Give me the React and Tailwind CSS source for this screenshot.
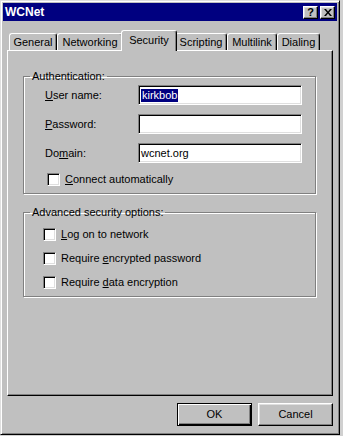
import React from 'react';

const tabs = [
  { label: 'General', w: 'w-[48px]' },
  { label: 'Networking', w: 'w-[66px]' },
  { label: 'Security', w: 'w-[56px]', active: true },
  { label: 'Scripting', w: 'w-[52px]' },
  { label: 'Multilink', w: 'w-[50px]' },
  { label: 'Dialing', w: 'w-[43px]' },
];

// sunken white box (text field / checkbox)
const sunken =
  'bg-white border border-t-[#808080] border-l-[#808080] border-r-white border-b-white shadow-[inset_1px_1px_#000,inset_-1px_-1px_#dfdfdf]';

const raised =
  'bg-[#c0c0c0] border border-t-white border-l-white border-r-black border-b-black shadow-[inset_-1px_-1px_#808080,inset_1px_1px_#dfdfdf]';

function Field({ label, children }) {
  return (
    <div className="flex items-center h-[20px]">
      <div className="w-[93px]">{label}</div>
      <div className={`w-[164px] h-[20px] flex items-center pl-[2px] ${sunken}`}>{children}</div>
    </div>
  );
}

function Check({ children }) {
  return (
    <div className="flex items-center h-[13px]">
      <div className={`w-[13px] h-[13px] ${sunken}`} />
      <span className="ml-[5px]">{children}</span>
    </div>
  );
}

export default function App() {
  return (
    <div className="w-[343px] h-[436px] bg-[#d0d0d0] font-['Liberation_Sans',Arial,sans-serif] text-[11px] leading-[13px] text-black">
      <div className="w-[340px] h-[435px] bg-[#c0c0c0] border border-t-[#dfdfdf] border-l-[#dfdfdf] border-r-black border-b-black shadow-[inset_1px_1px_#fff,inset_-1px_-1px_#808080] p-[2px] flex flex-col">

        {/* Title bar */}
        <div className="h-[18px] bg-[#000080] flex items-center justify-between pl-[2px] pr-[2px]">
          <span className="text-white font-bold text-[12px]">WCNet</span>
          <div className="flex gap-[2px]">
            <div className={`w-[15px] h-[13px] flex items-center justify-center font-bold text-[11px] leading-none ${raised}`}>?</div>
            <div className={`w-[15px] h-[13px] flex items-center justify-center ${raised}`}>
              <svg width="8" height="7" viewBox="0 0 8 7">
                <path d="M0 0h2l2 2.5L6 0h2L5 3.5 8 7H6L4 4.5 2 7H0l3-3.5z" fill="#000" />
              </svg>
            </div>
          </div>
        </div>

        {/* Tabs */}
        <div className="flex items-end h-[20px] mt-[9px] pl-[6px]">
          {tabs.map((t) =>
            t.active ? (
              <div
                key={t.label}
                className={`${t.w} h-[21px] -mb-px -mx-[2px] relative z-10 bg-[#c0c0c0] flex items-start justify-center pt-[3px] border-t border-l border-white border-r border-r-black rounded-t-[3px] shadow-[inset_-1px_0_#808080]`}
              >
                {t.label}
              </div>
            ) : (
              <div
                key={t.label}
                className={`${t.w} h-[17px] flex items-center justify-center border-t border-l border-white border-r border-r-black rounded-t-[3px] shadow-[inset_-1px_0_#808080]`}
              >
                {t.label}
              </div>
            )
          )}
        </div>

        {/* Tab panel */}
        <div className="ml-[4px] w-[326px] h-[346px] border border-t-white border-l-white border-r-black border-b-black shadow-[inset_-1px_-1px_#808080] pt-[19px] pl-[15px]">

          <fieldset className="w-[293px] border border-[#808080] shadow-[inset_1px_1px_#fff,1px_1px_#fff]">
            <legend className="ml-[6px] px-[2px]">Authentication:</legend>
            <div className="flex flex-col gap-[9px] pt-[2px] pl-[21px]">
              <Field label={<span><u>U</u>ser name:</span>}>
                <span className="bg-[#000080] text-white px-[1px]">kirkbob</span>
              </Field>
              <Field label={<span><u>P</u>assword:</span>} />
              <Field label={<span>Do<u>m</u>ain:</span>}>
                <span>wcnet.org</span>
              </Field>
              <div className="pl-[2px] pt-[1px] pb-[7px]">
                <Check><u>C</u>onnect automatically</Check>
              </div>
            </div>
          </fieldset>

          <fieldset className="w-[293px] mt-[12px] border border-[#808080] shadow-[inset_1px_1px_#fff,1px_1px_#fff]">
            <legend className="ml-[6px] px-[2px]">Advanced security options:</legend>
            <div className="flex flex-col gap-[11px] pt-[9px] pb-[7px] pl-[19px]">
              <Check><u>L</u>og on to network</Check>
              <Check>Require <u>e</u>ncrypted password</Check>
              <Check>Require <u>d</u>ata encryption</Check>
            </div>
          </fieldset>
        </div>

        {/* Buttons */}
        <div className="flex justify-end gap-[6px] mt-[7px] pr-[4px]">
          <button className="w-[75px] h-[23px] bg-[#c0c0c0] border border-black shadow-[inset_1px_1px_#fff,inset_-1px_-1px_#000,inset_-2px_-2px_#808080]">
            OK
          </button>
          <button className={`w-[75px] h-[23px] ${raised}`}>Cancel</button>
        </div>
      </div>
    </div>
  );
}
